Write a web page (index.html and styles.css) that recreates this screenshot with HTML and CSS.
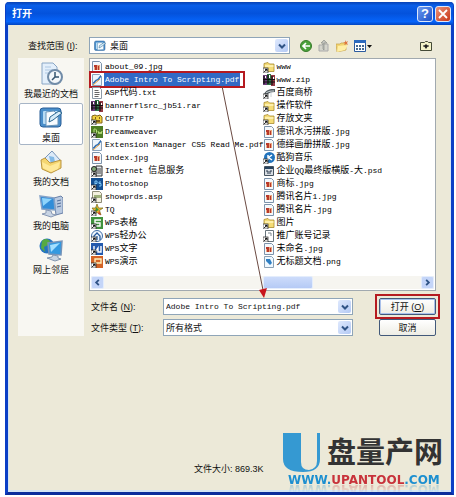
FILE: index.html
```html
<!DOCTYPE html>
<html lang="zh-CN">
<head>
    <meta charset="UTF-8">
    <meta name="viewport" content="width=device-width, initial-scale=1.0">
    <title>打开</title>
    <link rel="stylesheet" href="styles.css">
</head>
<body>
    <!-- icon set -->
    <svg class="sprite" aria-hidden="true">
        <symbol id="shortcut" viewBox="0 0 12 12">
            <rect x="0" y="7" width="5" height="5" fill="#fff" stroke="#222" stroke-width=".7"/>
            <path d="M1.2 11 3.8 8.4M2 8.3h2v2" stroke="#000" fill="none"/>
        </symbol>
        <symbol id="jpg" viewBox="0 0 12 12">
            <path d="M1.5.5h7l2 2v9h-9z" fill="#f4f8fc" stroke="#7c93ab"/>
            <path d="M3 4h6v5H3z" fill="#e8a37c"/>
            <path d="M3 4h3v2H3zM4 6h2v3H4zM7 5h1v4H7z" fill="#b8382a"/>
        </symbol>
        <symbol id="pdf" viewBox="0 0 12 12">
            <path d="M1.5.5h7l2 2v9h-9z" fill="#edf4fb" stroke="#8ba2bb"/>
            <path d="M2 9c2 0 2-3 4-3s2-3 4-4" stroke="#2c6db5" stroke-width="1.5" fill="none"/>
            <path d="M2 11 9 5" stroke="#e49a3a"/>
        </symbol>
        <symbol id="txt" viewBox="0 0 12 12">
            <path d="M1.5.5h7l2 2v9h-9z" fill="#fff" stroke="#8c99a6"/>
            <path d="M3.500 3.500h4M3.500 5.500h5M3.500 7.500h5M3.500 9.500h4" stroke="#666"/>
        </symbol>
        <symbol id="rar" viewBox="0 0 12 12">
            <path d="M0 1h4v10H0z" fill="#6d3c7a"/>
            <path d="M4 0h4v11H4z" fill="#2f7446"/>
            <path d="M8 1h4v11H8z" fill="#953a45"/>
            <path d="M1 2v8M5 1v9M9 2v9M0 5.500h12M0 8h12" stroke="#111" stroke-width="1.200"/>
            <path d="M2.500 2v2M6.500 1v3M10.500 3v2" stroke="#fff"/>
        </symbol>
        <symbol id="folder" viewBox="0 0 12 12">
            <path d="M1 2.500 5 1.500l1.500 1.500H11v7.500H1z" fill="#f5dc76" stroke="#a88a2e" stroke-width=".8"/>
            <path d="M2 5h8.500" stroke="#fff6bd" stroke-width="1.500"/>
            <use href="#shortcut"/>
        </symbol>
        <symbol id="ftp" viewBox="0 0 12 12">
            <path d="M1 3 4 2l2 1 3-1 2 2v6H1z" fill="#f1d13e" stroke="#80631a"/>
            <path d="M4 5h1M8 5h1M4 8h5" stroke="#5c3c10" stroke-width="1.300"/>
            <use href="#shortcut"/>
        </symbol>
        <symbol id="dw" viewBox="0 0 12 12">
            <path d="M0 0h12v12H0z" fill="#4d7c24"/>
            <path d="M3 3v5h1.500l1-1V4L4.500 3zM7 5l1 3 1-2 1 2 1-3" stroke="#b8df7d" fill="none"/>
            <use href="#shortcut"/>
        </symbol>
        <symbol id="iis" viewBox="0 0 12 12">
            <path d="M5 1h6v10H5z" fill="#dfe3e5" stroke="#333"/>
            <path d="M6 4h4M6 6h4M6 8h4" stroke="#444"/>
            <circle cx="3" cy="4" r="2.500" fill="#82aa76" stroke="#222"/>
            <use href="#shortcut"/>
        </symbol>
        <symbol id="ps" viewBox="0 0 12 12">
            <path d="M0 0h12v12H0z" fill="#124f92"/>
            <path d="M4 8V3h2v2.500H4M10 4H8v1.500h2V8H8" stroke="#7cc7f7" fill="none"/>
            <use href="#shortcut"/>
        </symbol>
        <symbol id="asp" viewBox="0 0 12 12">
            <path d="M1.500.5h7l2 2v9h-9z" fill="#f4f1df" stroke="#8f8d78"/>
            <path d="M3 4h7v3H3z" fill="#9fb17b"/>
            <use href="#shortcut"/>
        </symbol>
        <symbol id="tq" viewBox="0 0 12 12">
            <path d="M6 0 7.500 4H12L8.500 6.500 10 11 6 8.500 2 11l1-4.500L1 4h3.500z" fill="#efb42b" stroke="#716d21" stroke-width=".7"/>
            <path d="M5 3 8 6 4 8z" fill="#3d963c"/>
            <path d="m8 7 2 4-3-1z" fill="#cf402e"/>
            <use href="#shortcut"/>
        </symbol>
        <symbol id="et" viewBox="0 0 12 12">
            <path d="M0 0h12v12H0z" fill="#41923d"/>
            <path d="M10 3H4v3h5v3H4" stroke="#fff" stroke-width="1.400" fill="none"/>
            <use href="#shortcut"/>
        </symbol>
        <symbol id="office" viewBox="0 0 12 12">
            <circle cx="6" cy="6" r="5.500" fill="#f1f7fd" stroke="#3c6ba6"/>
            <path d="M3 9V6l3-3 3 3v4M6 6v4" stroke="#285c9e" stroke-width="1.300" fill="none"/>
            <use href="#shortcut"/>
        </symbol>
        <symbol id="wps" viewBox="0 0 12 12">
            <path d="M0 0h12v12H0z" fill="#245aae"/>
            <path d="M3 3v5h2l2-3v4h3V3" stroke="#fff" stroke-width="1.400" fill="none"/>
            <use href="#shortcut"/>
        </symbol>
        <symbol id="wpp" viewBox="0 0 12 12">
            <path d="M0 0h12v12H0z" fill="#d46426"/>
            <path d="M4 9V3h6v4H5" stroke="#fff0b9" stroke-width="1.400" fill="none"/>
            <use href="#shortcut"/>
        </symbol>
        <symbol id="bridge" viewBox="0 0 12 12">
            <path d="M1 7c3-5 6-5 11-5v3C8 5 5 6 3 9z" fill="#555e63"/>
            <path d="M3 6c3-2 5-2 8-2M8 5v5" stroke="#cad2d5" fill="none"/>
            <use href="#shortcut"/>
        </symbol>
        <symbol id="kugou" viewBox="0 0 12 12">
            <circle cx="6.500" cy="5.500" r="5.500" fill="#2374bd"/>
            <path d="M5 3v5M9 3 5.500 5.500 9 8" stroke="#fff" stroke-width="1.500" fill="none"/>
            <use href="#shortcut"/>
        </symbol>
        <symbol id="psd" viewBox="0 0 12 12">
            <path d="M1.500 1.500h9v9h-9z" fill="#d7dce2" stroke="#45525f"/>
            <path d="M2 3h8" stroke="#27435f" stroke-width="2"/>
            <path d="M3 6h2v3M7 9V6h2" stroke="#26364b" fill="none"/>
        </symbol>
        <symbol id="note" viewBox="0 0 12 12">
            <path d="M2.500.5h8v11h-8z" fill="#fff" stroke="#68757d"/>
            <path d="M5 3h3v3" stroke="#7d8991" fill="none"/>
            <use href="#shortcut"/>
        </symbol>
        <symbol id="png" viewBox="0 0 12 12">
            <path d="M1.500.5h7l2 2v9h-9z" fill="#eff8ff" stroke="#8aa0b4"/>
            <path d="M3 3h4l2 4-2 2-4-4z" fill="#2f7fc3"/>
        </symbol>
        <symbol id="chevron" viewBox="0 0 10 10">
            <path d="m2 3.500 3 3 3-3" stroke="#2f5385" stroke-width="2" fill="none"/>
        </symbol>
        <symbol id="desktop" viewBox="0 0 24 24">
            <rect x="1" y="2" width="21" height="19" rx="3" fill="#4a8fcb" stroke="#2a5f97"/>
            <rect x="4" y="5" width="15" height="13" rx="1" fill="#b7dcf5"/>
            <path d="m7 6 8-1 4 4v10l-12 1z" fill="#f8fcff" stroke="#6893b7"/>
            <path d="m10 16 1-5 9-6 3 2-9 7z" fill="#d5ebf8" stroke="#2a668f"/>
        </symbol>
    </svg>

    <main class="dialog">
        <header class="title-bar">
            <h1>打开</h1>
            <button class="title-btn" type="button" aria-label="帮助">?</button>
            <button class="title-btn close" type="button" aria-label="关闭">
                <svg viewBox="0 0 12 12"><path d="m2 2 8 8m0-8-8 8" stroke="#fff" stroke-width="1.800"/></svg>
            </button>
        </header>

        <form class="content">
            <label class="look-label" for="lookIn">查找范围 (<u>I</u>):</label>
            <div class="toolbar">
                <div class="combo">
                    <svg class="combo-icon"><use href="#desktop"/></svg>
                    <select id="lookIn" class="with-icon"><option>桌面</option></select>
                    <span class="arrow"><svg><use href="#chevron"/></svg></span>
                </div>
                <button class="tool" type="button" aria-label="后退">
                    <svg viewBox="0 0 12 12"><circle cx="6" cy="6" r="5.500" fill="#4ba13b" stroke="#387b2a"/><path d="M10 6H3M6 3 3 6l3 3" stroke="#fff" stroke-width="1.700" fill="none"/></svg>
                </button>
                <button class="tool" type="button" aria-label="向上一级">
                    <svg viewBox="0 0 12 12"><path d="M1 5h3l1-1h5v7H1z" fill="#d4d4cb" stroke="#aaa"/><path d="M6 10V3h3L6 0 3 3h2v6z" fill="#c4c5bf" stroke="#8e908b" stroke-width=".7"/></svg>
                </button>
                <button class="tool" type="button" aria-label="新建文件夹">
                    <svg viewBox="0 0 12 12"><path d="M0 4h4l1-1h5v7L1 12z" fill="#f3d571" stroke="#c4a147" stroke-width=".7"/><path d="m2 6 10-1-3 5-8 2z" fill="#ffefa6"/><path d="m9 0 1 2 2-1-1 2 1 2-2-1-2 1 1-2-2-1h2z" fill="#df743c"/></svg>
                </button>
                <button class="tool view" type="button" aria-label="查看">
                    <svg viewBox="0 0 18 12"><path d="M.5.5h11v11H.5z" fill="#fff" stroke="#2c5b9e"/><path d="M0 1.500h12" stroke="#2b69bd" stroke-width="3"/><path d="M2 5h2v2H2zm3 0h2v2H5zm3 0h2v2H8zM2 8h2v2H2zm3 0h2v2H5zm3 0h2v2H8z" fill="#456a91"/><path d="M13 5h5l-2.500 3z" fill="#111"/></svg>
                </button>
                <button class="tool extra" type="button" aria-label="选项">
                    <svg viewBox="0 0 12 12"><path d="M.5 2.500h4l1-1h2l1 1h3v8H.5z" fill="#f4f3c8" stroke="#444a36"/><path d="m6 4 2 2-2 3-2-3z" fill="#222"/><path d="M3 6h6" stroke="#222"/></svg>
                </button>
            </div>

            <nav class="places">
                <button type="button">
                    <svg viewBox="0 0 24 24"><path d="M3 1h11l4 4v17H3z" fill="#e3effb" stroke="#8aa6c5"/><path d="M6 5h6M6 8h8M6 11h5" stroke="#adc7e2"/><circle cx="16" cy="15" r="7" fill="#f3f7fa" stroke="#718ca8" stroke-width="2"/><path d="M16 10v5h4m-4 0-3 3" stroke="#35546f" stroke-width="1.500" fill="none"/></svg>
                    我最近的文档
                </button>
                <button class="active" type="button">
                    <svg><use href="#desktop"/></svg>
                    桌面
                </button>
                <button type="button">
                    <svg viewBox="0 0 24 24"><path d="m6 8 7-7 8 9-8 10z" fill="#dceaf8" stroke="#7995b8"/><path d="m10 6 5 1 1 5-4 2z" fill="#82b9e6"/><path d="M2 10 6 8l5 5 11-3v8l-10 5-9-4z" fill="#f5d671" stroke="#bb9540"/><path d="m3 12 8 4 10-4-2 7-7 3-8-4z" fill="#ffe99a"/></svg>
                    我的文档
                </button>
                <button type="button">
                    <svg viewBox="0 0 24 24"><path d="m15 4 7-2 2 2v15l-7 2z" fill="#b9c9e0" stroke="#6b82a8"/><path d="m18 7 4-1m-4 4 4-1m-4 4 4-1" stroke="#536d98"/><path d="m1 2 14 2 1 12-13-1z" fill="#328dd8" stroke="#84a2c8" stroke-width="1.500"/><path d="m3 4 10 1-9 7z" fill="#8fd4fb"/><path d="m7 16 5 1 1 3 4 1-5 2-9-3 4-1z" fill="#c8d4e4" stroke="#8798b4"/></svg>
                    我的电脑
                </button>
                <button type="button">
                    <svg viewBox="0 0 24 24"><circle cx="8" cy="8" r="7.500" fill="#2674c1"/><path d="M3 3c3-3 6-2 8 0L9 7 5 9l1 5-4-4z" fill="#56aa43"/><path d="m9 5 14-2-1 14-12-1z" fill="#3399e0" stroke="#7894b8" stroke-width="1.500"/><path d="m11 7 10-2-9 9z" fill="#a5e0ff"/><path d="m14 17 5 1v2l3 1-6 2-8-3 5-1z" fill="#c7d4e2" stroke="#8196b0"/></svg>
                    网上邻居
                </button>
            </nav>

            <section class="main-pane">
                <div class="file-box">
                    <ul class="files">
                        <li><svg><use href="#jpg"/></svg><span>about_09.jpg</span></li>
                        <li class="selected"><svg><use href="#pdf"/></svg><span>Adobe Intro To Scripting.pdf</span></li>
                        <li><svg><use href="#txt"/></svg><span>ASP<b>代码</b>.txt</span></li>
                        <li><svg><use href="#rar"/></svg><span>bannerflsrc_jb51.rar</span></li>
                        <li><svg><use href="#ftp"/></svg><span>CUTFTP</span></li>
                        <li><svg><use href="#dw"/></svg><span>Dreamweaver</span></li>
                        <li><svg><use href="#pdf"/></svg><span>Extension Manager CS5 Read Me.pdf</span></li>
                        <li><svg><use href="#jpg"/></svg><span>index.jpg</span></li>
                        <li><svg><use href="#iis"/></svg><span>Internet <b>信息服务</b></span></li>
                        <li><svg><use href="#ps"/></svg><span>Photoshop</span></li>
                        <li><svg><use href="#asp"/></svg><span>showprds.asp</span></li>
                        <li><svg><use href="#tq"/></svg><span>TQ</span></li>
                        <li><svg><use href="#et"/></svg><span>WPS<b>表格</b></span></li>
                        <li><svg><use href="#office"/></svg><span>WPS<b>轻办公</b></span></li>
                        <li><svg><use href="#wps"/></svg><span>WPS<b>文字</b></span></li>
                        <li><svg><use href="#wpp"/></svg><span>WPS<b>演示</b></span></li>
                        <li><svg><use href="#folder"/></svg><span>www</span></li>
                        <li><svg><use href="#rar"/></svg><span>www.zip</span></li>
                        <li><svg><use href="#bridge"/></svg><span><b>百度商桥</b></span></li>
                        <li><svg><use href="#folder"/></svg><span><b>操作软件</b></span></li>
                        <li><svg><use href="#folder"/></svg><span><b>存放文夹</b></span></li>
                        <li><svg><use href="#jpg"/></svg><span><b>德讯水污拼版</b>.jpg</span></li>
                        <li><svg><use href="#jpg"/></svg><span><b>德绎画册拼版</b>.jpg</span></li>
                        <li><svg><use href="#kugou"/></svg><span><b>酷狗音乐</b></span></li>
                        <li><svg><use href="#psd"/></svg><span><b>企业</b>QQ<b>最终版横版</b>-<b>大</b>.psd</span></li>
                        <li><svg><use href="#jpg"/></svg><span><b>商标</b>.jpg</span></li>
                        <li><svg><use href="#jpg"/></svg><span><b>腾讯名片</b>1.jpg</span></li>
                        <li><svg><use href="#jpg"/></svg><span><b>腾讯名片</b>.jpg</span></li>
                        <li><svg><use href="#folder"/></svg><span><b>图片</b></span></li>
                        <li><svg><use href="#note"/></svg><span><b>推广账号记录</b></span></li>
                        <li><svg><use href="#jpg"/></svg><span><b>未命名</b>.jpg</span></li>
                        <li><svg><use href="#png"/></svg><span><b>无标题文档</b>.png</span></li>
                    </ul>
                    <div class="scrollbar">
                        <button type="button" aria-label="向左"><svg viewBox="0 0 10 10"><path d="M6.500 2 3.500 5l3 3" stroke="#2f5385" stroke-width="2" fill="none"/></svg></button>
                        <div class="track"><div class="thumb"></div></div>
                        <button type="button" aria-label="向右"><svg viewBox="0 0 10 10"><path d="m3.500 2 3 3-3 3" stroke="#2f5385" stroke-width="2" fill="none"/></svg></button>
                    </div>
                    <!-- arrow from the chosen file to the name field -->
                    <svg class="pointer" viewBox="0 0 50 212" aria-hidden="true">
                        <path d="M4 0 45 204" stroke="#6b4a42" fill="none"/>
                        <path d="m41 204 8-2-3 10z" fill="#c8141c"/>
                    </svg>
                </div>

                <div class="fields">
                    <label for="fileName">文件名 (<u>N</u>):</label>
                    <div class="combo">
                        <input id="fileName" class="file-name" type="text" value="Adobe Intro To Scripting.pdf">
                        <button class="arrow" type="button" aria-label="最近的文件"><svg><use href="#chevron"/></svg></button>
                    </div>
                    <button class="btn primary" type="submit">打开 (<u>O</u>)</button>

                    <label for="fileType">文件类型 (<u>T</u>):</label>
                    <div class="combo">
                        <select id="fileType"><option>所有格式</option></select>
                        <span class="arrow"><svg><use href="#chevron"/></svg></span>
                    </div>
                    <button class="btn" type="button">取消</button>
                </div>
            </section>
        </form>

        <footer class="footer">
            <p class="size">文件大小: 869.3K</p>
            <div class="brand">
                <div class="brand-name">
                    <svg viewBox="0 0 37 40" aria-hidden="true"><path d="M0 0h18v29q0 8 8 8 8-1 8-9V0h3v26q0 13-17 13Q0 39 0 26z" fill="#3599d2"/></svg>
                    <span>盘量产网</span>
                </div>
                <div class="brand-url">WWW.<span>UPANTOOL</span>.COM</div>
            </div>
        </footer>
    </main>
</body>
</html>
```
FILE: styles.css
```css
* {
    box-sizing: border-box;
}

body {
    margin: 0;
    padding: 2px 2px 2px 5px;
    min-height: 100vh;
    display: flex;
    background: #fff;
    color: #111;
    font: 9px/12px "Liberation Sans", "Noto Sans CJK SC", sans-serif;
}

button, input, select {
    font: inherit;
    color: inherit;
    margin: 0;
    padding: 0;
}

.sprite {
    position: absolute;
    width: 0;
    height: 0;
}

.dialog {
    flex: 1;
    display: flex;
    flex-direction: column;
    background: #ece9d8;
    border: 3px solid #0b3fc6;
    border-top: 0;
    border-bottom-color: #0a2d9c;
    border-radius: 4px 4px 0 0;
    box-shadow: inset 0 -2px #d3e5f3, inset 1px 0 #d3e5f3, inset -1px 0 #d3e5f3;
}

/* Title bar */
.title-bar {
    display: flex;
    align-items: center;
    gap: 2px;
    height: 23px;
    margin: 0 -2px;
    padding: 0 2px 0 6px;
    background: linear-gradient(#0842b4, #0a5ee8 15%, #0452dc 50%, #0664fa 85%, #0345c0);
    border-radius: 3px 3px 0 0;
}

h1 {
    flex: 1;
    margin: 0;
    font-size: 10px;
    font-weight: bold;
    color: #fff;
}

.title-btn {
    display: grid;
    place-items: center;
    width: 16px;
    height: 16px;
    border: 1px solid #dce8fb;
    border-radius: 3px;
    background: linear-gradient(135deg, #6c9af0, #1c50c8);
    color: #fff;
    font-size: 13px;
    font-weight: bold;
}

.title-btn.close {
    background: linear-gradient(135deg, #ec9277, #c8381a);
}

.title-btn svg {
    width: 12px;
    height: 12px;
}

/* Content */
.content {
    display: grid;
    grid-template-columns: 66px 1fr;
    gap: 4px 5px;
    padding: 12px 15px 0 10px;
}

.look-label {
    align-self: center;
    padding-left: 10px;
    white-space: nowrap;
}

.toolbar {
    display: flex;
    align-items: center;
    gap: 6px;
}

.toolbar .combo {
    flex: 1;
    margin-right: 4px;
}

.combo {
    position: relative;
    display: flex;
    height: 17px;
    background: #fff;
    border: 1px solid #8fa5b8;
}

.combo select,
.combo input {
    flex: 1;
    min-width: 0;
    padding: 0 2px;
    border: 0;
    outline: 0;
    background: transparent;
    appearance: none;
}

.combo select.with-icon {
    padding-left: 4px;
}

.combo-icon {
    width: 12px;
    height: 12px;
    margin: 2px 0 0 4px;
}

.combo .file-name {
    font: 8px/12px "Liberation Mono", monospace;
}

.arrow {
    display: grid;
    place-items: center;
    width: 13px;
    margin: 1px;
    border: 0;
    border-radius: 2px;
    background: linear-gradient(135deg, #dfe9fd, #b3c9f4);
    pointer-events: none;
}

.arrow svg {
    width: 10px;
    height: 10px;
}

.tool {
    width: 12px;
    height: 12px;
    border: 0;
    background: none;
}

.tool svg {
    display: block;
    width: 100%;
    height: 100%;
}

.tool.view {
    width: 18px;
}

.tool.extra {
    margin: 0 4px 0 42px;
}

/* Places bar */
.places {
    display: flex;
    flex-direction: column;
    gap: 2px;
    padding: 1px;
    background: #f8f7f2;
}

.places button {
    display: flex;
    flex-direction: column;
    align-items: center;
    height: 42px;
    border: 1px solid transparent;
    border-radius: 2px;
    background: none;
    white-space: nowrap;
}

.places button.active {
    background: #fff;
    border-color: #a7b5c6;
}

.places svg {
    width: 24px;
    height: 24px;
    margin: 2px 0;
}

/* File list */
.file-box {
    position: relative;
    padding: 1px;
    background: #fff;
    border: 1px solid #a1a9af;
}

.files {
    display: grid;
    grid-template-columns: 1fr 1fr;
    grid-template-rows: repeat(16, 13px);
    grid-auto-flow: column;
    margin: 0 0 8px;
    padding: 0;
    list-style: none;
    font: 8px/13px "Liberation Mono", "Noto Sans CJK SC", monospace;
    color: #000;
}

.files li {
    position: relative;
    display: flex;
    align-items: center;
    gap: 1px;
    min-width: 0;
    white-space: nowrap;
}

.files svg {
    flex: none;
    width: 12px;
    height: 12px;
}

.files b {
    font: 9px/12px "Noto Sans CJK SC", sans-serif;
}

.files span {
    height: 13px;
    padding: 0 1px;
}

.selected span {
    background: #316ac5;
    color: #fff;
}

.selected::after {
    content: "";
    position: absolute;
    inset: -2px 18px -2px -2px;
    border: 2px solid #b51a20;
}

.scrollbar {
    display: flex;
    height: 13px;
    background: #f6f5f0;
}

.scrollbar button {
    display: grid;
    place-items: center;
    width: 13px;
    border: 1px solid #e4edfc;
    border-radius: 2px;
    background: #c4d5f8;
}

.scrollbar svg {
    width: 9px;
    height: 9px;
}

.track {
    flex: 1;
}

.thumb {
    width: 16%;
    height: 13px;
    margin-left: 50%;
    border: 1px solid #e4edfc;
    border-radius: 2px;
    background: linear-gradient(#cddcfb, #b5caf5);
}

.pointer {
    position: absolute;
    top: 27px;
    left: 128px;
    width: 50px;
    height: 212px;
    pointer-events: none;
}

/* Name and type fields */
.fields {
    display: grid;
    grid-template-columns: 74px 1fr 57px;
    gap: 4px 0;
    align-items: center;
    margin-top: 7px;
}

.fields .combo {
    margin-right: 26px;
}

.fields label {
    padding-left: 2px;
}

.btn {
    height: 17px;
    border: 1px solid #42597a;
    border-radius: 2px;
    background: linear-gradient(#fff, #eeede5);
    line-height: 14px;
}

.btn.primary {
    position: relative;
    box-shadow: inset 0 0 0 1px #a9c0ea;
}

.btn.primary::after {
    content: "";
    position: absolute;
    inset: -5px;
    border: 2px solid #b51a20;
}

/* Footer */
.footer {
    flex: 1;
    display: flex;
    justify-content: space-between;
    align-items: flex-end;
    padding: 0 8px 5px 186px;
}

.size {
    margin: 0 0 12px;
    white-space: nowrap;
}

.brand-name {
    display: flex;
    align-items: flex-start;
    gap: 7px;
    font: bold 29px/34px "Noto Sans CJK SC", sans-serif;
    color: #333;
}

.brand-name svg {
    width: 37px;
    height: 40px;
}

.brand-url {
    padding-left: 5px;
    font: bold 12px/14px "DejaVu Sans", sans-serif;
    color: #1c8fd0;
    -webkit-box-reflect: below -5px linear-gradient(transparent 20%, rgba(0, 0, 0, .4));
}

.brand-url span {
    color: #c8323a;
}
```
